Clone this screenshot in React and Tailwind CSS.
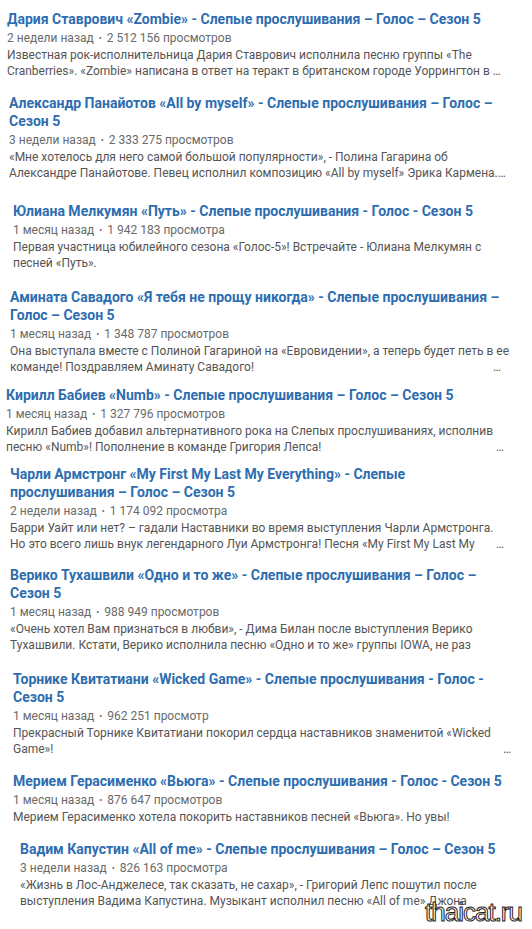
import React from 'react';

// список видео: заголовок, мета, описание (строки как на скриншоте)
const videos = [
  {
    box: 'mt-[10px] pl-[7px]',
    title: ['Дария Ставрович «Zombie» - Слепые прослушивания – Голос – Сезон 5'],
    meta: ['2 недели назад', '2 512 156 просмотров'],
    desc: [
      'Известная рок-исполнительница Дария Ставрович исполнила песню группы «The',
      'Cranberries». «Zombie» написана в ответ на теракт в британском городе Уоррингтон в  …',
    ],
  },
  {
    box: 'mt-[15px] pl-[9px]',
    title: ['Александр Панайотов «All by myself» - Слепые прослушивания – Голос –', 'Сезон 5'],
    meta: ['3 недели назад', '2 333 275 просмотров'],
    desc: [
      '«Мне хотелось для него самой большой популярности», - Полина Гагарина об',
      'Александре Панайотове. Певец исполнил композицию «All by myself» Эрика Кармена.…',
    ],
  },
  {
    box: 'mt-[21px] pl-[13px]',
    title: ['Юлиана Мелкумян «Путь» - Слепые прослушивания - Голос - Сезон 5'],
    meta: ['1 месяц назад', '1 942 183 просмотра'],
    desc: ['Первая участница юбилейного сезона «Голос-5»! Встречайте - Юлиана Мелкумян с', 'песней «Путь».'],
  },
  {
    box: 'mt-[17px] pl-[10px]',
    title: ['Амината Савадого «Я тебя не прощу никогда» - Слепые прослушивания –', 'Голос – Сезон 5'],
    meta: ['1 месяц назад', '1 348 787 просмотров'],
    desc: [
      'Она выступала вместе с Полиной Гагариной на «Евровидении», а теперь будет петь в ее',
      'команде! Поздравляем Аминату Савадого!',
    ],
    dots: 'w-[490px]',
  },
  {
    box: 'mt-[11px] pl-[6px]',
    title: ['Кирилл Бабиев «Numb» - Слепые прослушивания – Голос – Сезон 5'],
    meta: ['1 месяц назад', '1 327 796 просмотров'],
    desc: [
      'Кирилл Бабиев добавил альтернативного рока на Слепых прослушиваниях, исполнив',
      'песню «Numb»! Пополнение в команде Григория Лепса!',
    ],
    dots: 'w-[497px]',
  },
  {
    box: 'mt-[10px] pl-[10px]',
    title: ['Чарли Армстронг «My First My Last My Everything» - Слепые', 'прослушивания – Голос – Сезон 5'],
    meta: ['2 недели назад', '1 174 092 просмотра'],
    desc: [
      'Барри Уайт или нет? – гадали Наставники во время выступления Чарли Армстронга.',
      'Но это всего лишь внук легендарного Луи Армстронга! Песня «My First My Last My',
    ],
    dots: 'w-[493px]',
  },
  {
    box: 'mt-[14px] pl-[10px]',
    title: ['Верико Тухашвили «Одно и то же» - Слепые прослушивания – Голос –', 'Сезон 5'],
    meta: ['1 месяц назад', '988 949 просмотров'],
    desc: [
      '«Очень хотел Вам признаться в любви», - Дима Билан после выступления Верико',
      'Тухашвили. Кстати, Верико исполнила песню «Одно и то же» группы IOWA, не раз',
    ],
  },
  {
    box: 'mt-[17px] pl-[13px]',
    title: ['Торнике Квитатиани «Wicked Game» - Слепые прослушивания - Голос -', 'Сезон 5'],
    meta: ['1 месяц назад', '962 251 просмотр'],
    desc: ['Прекрасный Торнике Квитатиани покорил сердца наставников знаменитой «Wicked', 'Game»!'],
    dots: 'w-[497px]',
  },
  {
    box: 'mt-[15px] pl-[13px]',
    title: ['Мерием Герасименко «Вьюга» - Слепые прослушивания - Голос - Сезон 5'],
    meta: ['1 месяц назад', '876 647 просмотров'],
    desc: ['Мерием Герасименко хотела покорить наставников песней «Вьюга». Но увы!'],
  },
  {
    box: 'mt-[15px] pl-[20px]',
    title: ['Вадим Капустин «All of me» - Слепые прослушивания – Голос – Сезон 5'],
    meta: ['3 недели назад', '826 163 просмотра'],
    desc: [
      '«Жизнь в Лос-Анджелесе, так сказать, не сахар», - Григорий Лепс пошутил после',
      'выступления Вадима Капустина. Музыкант исполнил песню «All of me» Джона',
    ],
  },
];

function VideoItem({ v }) {
  return (
    <div className={v.box}>
      {v.title.map((line, i) => (
        <div key={i} className="text-[14px] leading-[18px] font-bold text-[#2d6db0] whitespace-nowrap">
          {line}
        </div>
      ))}
      <div className="mt-px h-[18px] text-[12px] leading-[18px] text-[#6a6a6a] whitespace-nowrap">
        {v.meta[0]} <span className="text-[9px] align-[1px] px-[2px]">•</span> {v.meta[1]}
      </div>
      <div className="text-[12px] leading-[16px] text-[#555555]">
        {v.desc.map((line, i) => {
          const last = i === v.desc.length - 1;
          if (last && v.dots) {
            return (
              <div key={i} className={`flex ${v.dots} whitespace-nowrap`}>
                <span>{line}</span>
                <span className="ml-auto tracking-[-1px]">…</span>
              </div>
            );
          }
          return (
            <div key={i} className="whitespace-nowrap">
              {line}
            </div>
          );
        })}
      </div>
    </div>
  );
}

export default function App() {
  return (
    <div className="relative w-[532px] h-[929px] overflow-hidden bg-white font-['Roboto','Liberation_Sans',sans-serif]">
      <div className="flex flex-col">
        {videos.map((v, i) => (
          <VideoItem key={i} v={v} />
        ))}
      </div>
      {/* водяной знак */}
      <div className="absolute right-[10px] bottom-[4px] text-[26px] leading-none tracking-[-1px] text-white [-webkit-text-stroke:1px_#222] font-['Liberation_Sans',sans-serif]">
        thaicat.ru
      </div>
    </div>
  );
}
